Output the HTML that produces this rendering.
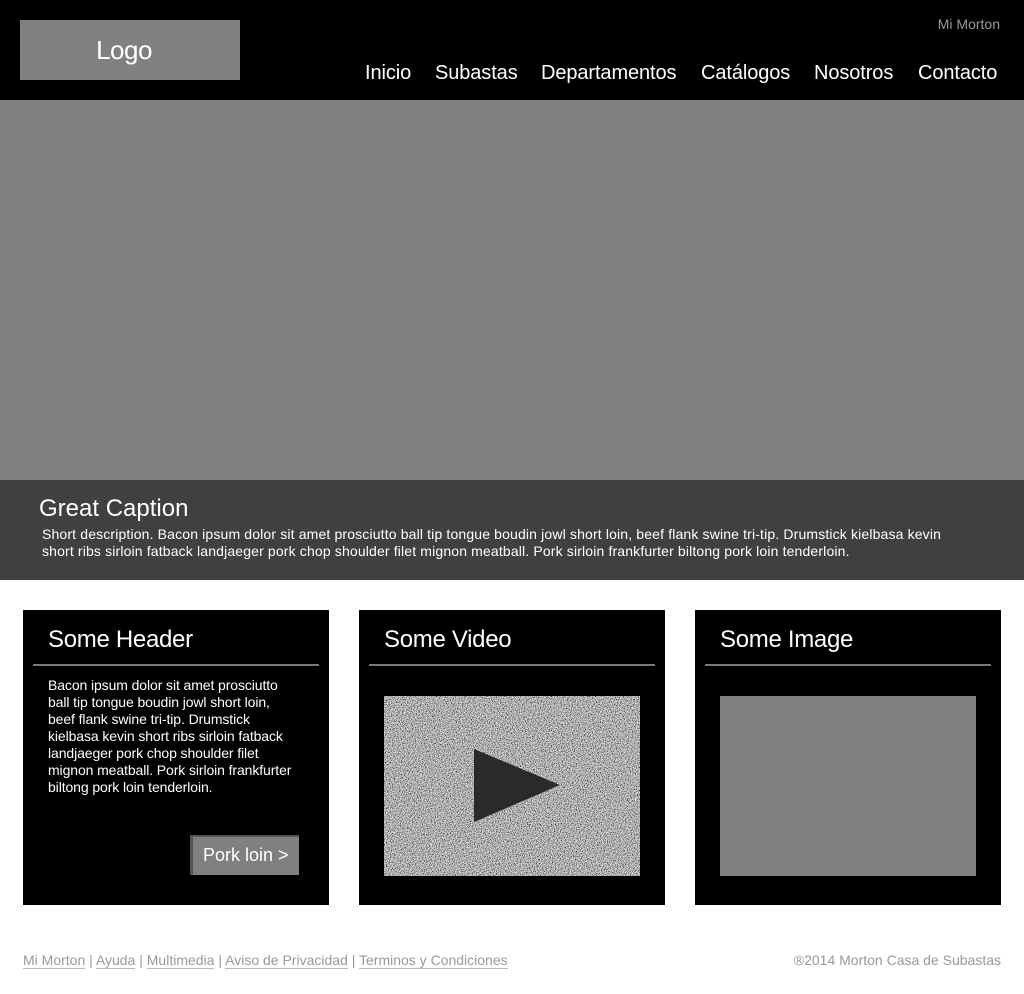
<!DOCTYPE html>
<html><head><meta charset="utf-8"><style>
*{margin:0;padding:0;box-sizing:border-box}
body{width:1024px;height:994px;background:#fff;font-family:"Liberation Sans",Arial,sans-serif;position:relative;overflow:hidden}
.a{position:absolute;white-space:nowrap}
.hdr{left:0;top:0;width:1024px;height:100px;background:#000}
.logo{left:20px;top:20px;width:220px;height:60px;background:#808080;color:#fff;font-size:26px;text-align:center;line-height:60px;letter-spacing:-0.5px;padding-right:12px}
.nav{color:#fff;font-size:20px;top:62px;letter-spacing:-0.1px}
.hero{left:0;top:100px;width:1024px;height:380px;background:#7f7f7f}
.cap{left:0;top:480px;width:1024px;height:100px;background:#404040;color:#fff}
.card{top:610px;width:306px;height:295px;background:#000;color:#fff}
.card h2{position:absolute;left:25px;top:16px;font-weight:normal;font-size:24px;letter-spacing:-0.3px}
.card .ln{position:absolute;left:10px;top:54px;width:286px;height:2px;background:#7a7a7a}
.ft{top:952px;font-size:14px;color:#999}
.ft u{text-decoration:none;border-bottom:1px solid #bbb}
</style></head><body>
<div class="a hdr"></div>
<div class="a logo">Logo</div>
<div class="a" style="right:24px;top:16px;color:#999;font-size:14px">Mi Morton</div>
<div class="a nav" style="left:365px">Inicio</div>
<div class="a nav" style="left:435px">Subastas</div>
<div class="a nav" style="left:541px">Departamentos</div>
<div class="a nav" style="left:701px">Catálogos</div>
<div class="a nav" style="left:814px">Nosotros</div>
<div class="a nav" style="left:918px">Contacto</div>
<div class="a hero"></div>
<div class="a cap">
<div class="a" style="left:39px;top:15px;font-size:24px">Great Caption</div>
<div class="a" style="left:42px;top:46px;font-size:14px;line-height:17px;letter-spacing:0.15px">Short description. Bacon ipsum dolor sit amet prosciutto ball tip tongue boudin jowl short loin, beef flank swine tri-tip. Drumstick kielbasa kevin<br>short ribs sirloin fatback landjaeger pork chop shoulder filet mignon meatball. Pork sirloin frankfurter biltong pork loin tenderloin.</div>
</div>
<div class="a card" style="left:23px">
<h2>Some Header</h2><div class="ln"></div>
<div class="a" style="left:25px;top:67px;font-size:14px;line-height:17px;letter-spacing:-0.1px">Bacon ipsum dolor sit amet prosciutto<br>ball tip tongue boudin jowl short loin,<br>beef flank swine tri-tip. Drumstick<br>kielbasa kevin short ribs sirloin fatback<br>landjaeger pork chop shoulder filet<br>mignon meatball. Pork sirloin frankfurter<br>biltong pork loin tenderloin.</div>
<div class="a" style="left:167px;top:225px;width:109px;height:40px;background:#808080;border-left:3px solid #555;border-top:2px solid #555;color:#fff;font-size:18px;line-height:36px;padding-left:10px">Pork loin &gt;</div>
</div>
<div class="a card" style="left:359px">
<h2>Some Video</h2><div class="ln"></div>
<svg class="a" style="left:25px;top:86px" width="256" height="180"><filter id="n" x="0" y="0" width="100%" height="100%"><feTurbulence type="fractalNoise" baseFrequency="1.2" numOctaves="1" seed="3"/><feColorMatrix type="matrix" values="2.2 0 0 0 -0.65  2.2 0 0 0 -0.65  2.2 0 0 0 -0.65  0 0 0 0 1"/></filter><rect width="256" height="180" filter="url(#n)"/><polygon points="90,53 90,126 176,89" fill="#2a2a2a"/></svg>
</div>
<div class="a card" style="left:695px">
<h2>Some Image</h2><div class="ln"></div>
<div class="a" style="left:25px;top:86px;width:256px;height:180px;background:#808080"></div>
</div>
<div class="a ft" style="left:23px"><u>Mi Morton</u> | <u>Ayuda</u> | <u>Multimedia</u> | <u>Aviso de Privacidad</u> | <u>Terminos y Condiciones</u></div>
<div class="a ft" style="right:23px">®2014 Morton Casa de Subastas</div>
</body></html>
